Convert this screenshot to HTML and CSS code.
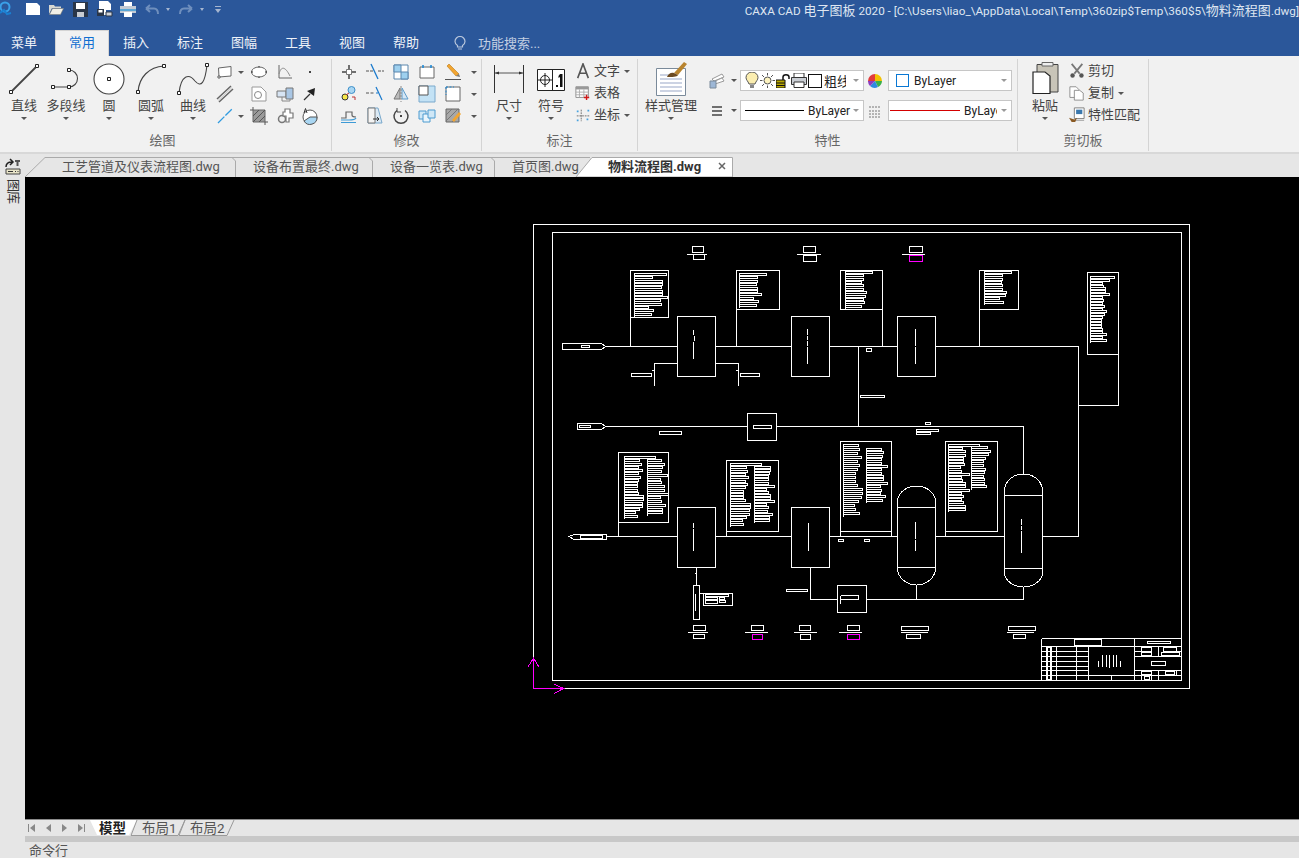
FILE: index.html
```html
<!DOCTYPE html>
<html lang="zh-CN">
<head>
    <meta charset="UTF-8">
    <title>CAXA CAD 电子图板 2020</title>
    <link rel="stylesheet" href="styles.css">
</head>
<body>
    <div class="topbar">
        <div class="quick">
            <svg class="q-logo" width="13" height="16" viewBox="0 0 13 16"><circle cx="5" cy="6" r="4.5" fill="none" stroke="#3aa0e8" stroke-width="2"/><path d="M0 12l4-3 3 4 4-1" fill="none" stroke="#1b7fd0" stroke-width="2"/></svg>
            <svg class="q-new" width="16" height="12" viewBox="0 0 16 12"><path d="M1 0H12L15 3V12H1Z" fill="#fff"/></svg>
            <svg class="q-open" width="16" height="11" viewBox="0 0 16 11"><path d="M1 10V1H6L7 2.5H13V4H4L1 10Z" fill="#d8d8d2"/><path d="M1.5 10.5L4.500 4.500H15.500L12.500 10.500Z" fill="#f1efe6" stroke="#7f7f78" stroke-width=".6"/></svg>
            <svg class="q-save" width="15" height="15" viewBox="0 0 15 15"><path d="M0 0H15V15H0Z" fill="#2a3648"/><path d="M3 1H12V7H3Z" fill="#fff"/><path d="M4 10H11V15H4Z" fill="#c8ccd2"/></svg>
            <svg class="q-saveas" width="16" height="16" viewBox="0 0 16 16"><path d="M2 0H11L14 3V9H9V14H2Z" fill="#fff"/><path d="M0 8H7V15H0Z" fill="#2a3648"/><path d="M1.500 9H5.500V11.500H1.500Z" fill="#fff"/><path d="M9 11H15V15H9Z" fill="#cfd3d8" stroke="#2a3648"/></svg>
            <svg class="q-print" width="16" height="15" viewBox="0 0 16 15"><path d="M4 0H12V4H4Z" fill="#fff"/><path d="M0 4H16V11H0Z" fill="#c3cad3"/><path d="M0 7H16V9H0Z" fill="#5ba7d6"/><path d="M4 10H12V15H4Z" fill="#fff"/></svg>
            <svg class="q-undo" width="14" height="11" viewBox="0 0 14 11"><path d="M1 4.500H9C12 4.500 13 6.500 13 10M1 4.500L5 1M1 4.500L5 8" fill="none" stroke="#6f8fbd" stroke-width="2"/></svg>
            <span class="q-caret"></span>
            <svg class="q-redo" width="14" height="11" viewBox="0 0 14 11"><path d="M13 4.500H5C2 4.500 1 6.500 1 10M13 4.500L9 1M13 4.500L9 8" fill="none" stroke="#6f8fbd" stroke-width="2"/></svg>
            <span class="q-caret"></span>
            <svg class="q-more" width="6" height="7" viewBox="0 0 6 7"><path d="M0 0H6V1H0ZM0 3H6L3 7Z" fill="#a6b6d0"/></svg>
        </div>
        <div class="title">CAXA CAD <span>电子图板</span> 2020 - [C:\Users\liao_\AppData\Local\Temp\360zip$Temp\360$5\<span>物料流程图</span>.dwg]</div>
    </div>

    <div class="menu-tabs">
        <div class="menu-tab first">菜单</div>
        <div class="menu-tab active">常用</div>
        <div class="menu-tab">插入</div>
        <div class="menu-tab">标注</div>
        <div class="menu-tab">图幅</div>
        <div class="menu-tab">工具</div>
        <div class="menu-tab">视图</div>
        <div class="menu-tab">帮助</div>
        <div class="search">
            <svg width="12" height="14" viewBox="0 0 12 14"><path d="M3.500 9.500C2 8.500 1 7 1 5.500A5 5 0 0 1 11 5.500C11 7 10 8.500 8.500 9.500V11H3.500ZM4 13H8" fill="none" stroke="#b8c6dc" stroke-width="1.200"/></svg>
            <span>功能搜索...</span>
        </div>
    </div>

    <div class="ribbon">
        <div class="group draw">
            <div class="group-body">
                <div class="big">
                    <svg width="36" height="36" viewBox="0 0 36 36"><path d="M5 31L31 5" stroke="#444" stroke-width="1.800"/><path class="grip" d="M3.500 29.500h3v3h-3zM29.500 3.500h3v3h-3z"/></svg>
                    <span>直线</span><i class="caret"></i>
                </div>
                <div class="big">
                    <svg width="36" height="36" viewBox="0 0 36 36"><path d="M5 26H21M21 9A8.500 8.500 0 0 1 21 26" fill="none" stroke="#444" stroke-width="1.100"/><path class="grip" d="M3.500 24.500h3v3h-3zM19.500 24.500h3v3h-3zM19.500 7.500h3v3h-3z"/></svg>
                    <span>多段线</span><i class="caret"></i>
                </div>
                <div class="big">
                    <svg width="36" height="36" viewBox="0 0 36 36"><circle cx="18" cy="18" r="15" fill="#fff" stroke="#444" stroke-width="1.100"/><path class="grip" d="M16.500 16.500h3v3h-3z"/></svg>
                    <span>圆</span><i class="caret"></i>
                </div>
                <div class="big">
                    <svg width="36" height="36" viewBox="0 0 36 36"><path d="M5 31C6 16 16 6 31 5" fill="none" stroke="#444" stroke-width="1.200"/><path class="grip" d="M3.500 29.500h3v3h-3zM29.500 3.500h3v3h-3z"/></svg>
                    <span>圆弧</span><i class="caret"></i>
                </div>
                <div class="big">
                    <svg width="36" height="36" viewBox="0 0 36 36"><path d="M4 32C6 14 14 12 20 20C26 27 30 22 32 4" fill="none" stroke="#444" stroke-width="1.100"/><path class="grip" d="M2.500 30.500h3v3h-3zM30.500 2.500h3v3h-3z"/></svg>
                    <span>曲线</span><i class="caret"></i>
                </div>
                <div class="tool-grid draw-grid">
                    <svg viewBox="0 0 18 18"><path d="M2.500 5L15 3.500V13L3 14Z" fill="#fff" stroke="#666"/><circle cx="3" cy="14" r="1.200" fill="#fff" stroke="#555"/></svg>
                    <i class="caret"></i>
                    <svg viewBox="0 0 18 18"><ellipse cx="9" cy="9" rx="7.500" ry="5" fill="#fff" stroke="#666"/><path d="M1 9h2M15 9h2M9 3v1.500M9 13.500V15" stroke="#333"/></svg>
                    <svg viewBox="0 0 18 18"><path d="M3 2V15H16" fill="none" stroke="#666"/><path d="M3 11C5 3 9 3 14 13" fill="none" stroke="#8a8a8a"/></svg>
                    <svg viewBox="0 0 18 18"><path d="M8 8h2v2H8z" fill="#444"/></svg>

                    <svg viewBox="0 0 18 18"><path d="M1 14L15 1M3 17L17 4" stroke="#666" stroke-width="1.500"/><path d="M2 15.500L16 2.500" stroke="#ccc"/></svg>
                    <span></span>
                    <svg viewBox="0 0 18 18"><path d="M2 2H11L16 7V16H2Z" fill="#fff" stroke="#999"/><circle cx="8" cy="10" r="3.500" fill="none" stroke="#888"/></svg>
                    <svg viewBox="0 0 18 18"><path d="M1 6H10V12H1Z" fill="#d7e4f3" stroke="#777"/><path d="M10 3H17V14H10Z" fill="#a9c6e4" stroke="#777"/><path d="M6 12V16H14V14" fill="none" stroke="#888"/></svg>
                    <svg viewBox="0 0 18 18"><path d="M3 15L9 9" stroke="#333" stroke-width="1.200"/><path d="M14 3L13 11L6 6Z" fill="#222"/></svg>

                    <svg viewBox="0 0 18 18"><path d="M2 16L16 2" stroke="#2f9be0" stroke-width="1.300" stroke-dasharray="9 1.500"/></svg>
                    <i class="caret"></i>
                    <svg viewBox="0 0 18 18"><path d="M3 3H15V15H3Z" fill="#9a9a9a" stroke="#666"/><path d="M3 9L9 3M3 15L15 3M9 15L15 9M0 3h3M15 15h3M3 0v3M15 15v3" stroke="#555"/></svg>
                    <svg viewBox="0 0 18 18"><circle cx="6" cy="12" r="3.500" fill="none" stroke="#777" stroke-width="1.500"/><path d="M9 2H14V6H17V11H13V15H10V9H7V5H9Z" fill="#fff" stroke="#777" stroke-width="1.200"/></svg>
                    <svg viewBox="0 0 18 18"><circle cx="9" cy="10" r="7" fill="#fff" stroke="#555"/><path d="M9 10H16A7 7 0 0 1 3 14L9 10Z" fill="#a9d6f2" stroke="#555"/><path d="M3 6L4.500 1.500L6 6" fill="none" stroke="#333"/></svg>
                </div>
            </div>
            <div class="group-name">绘图</div>
        </div>

        <div class="group modify">
            <div class="group-body">
                <div class="tool-grid modify-grid">
                    <svg viewBox="0 0 18 18"><path d="M6 9H2M16 9H12M9 6V2M9 16V12" stroke="#444" stroke-width="1.500"/><path d="M6.500 6.500h5v5h-5z" fill="#fff" stroke="#777"/></svg>
                    <svg viewBox="0 0 18 18"><path d="M0 8H8M12 8H18" stroke="#555" stroke-dasharray="3 1"/><path d="M5 1L12 16" stroke="#1778cc" stroke-width="1.300"/></svg>
                    <svg viewBox="0 0 18 18"><path d="M2 2H16V16H2Z" fill="#fff" stroke="#5b86ad"/><path d="M2 2H9V9H2ZM9 9H16V16H9Z" fill="#9ed0ef" stroke="#5b86ad"/></svg>
                    <svg viewBox="0 0 18 18"><path d="M2 4H16V15H2Z" fill="#fff" stroke="#666"/><path d="M5 2v3M13 2v3" stroke="#1f8ad8" stroke-width="1.600"/></svg>
                    <svg viewBox="0 0 18 18"><path d="M3 3L5 1L15 11L12 13Z" fill="#f2a531" stroke="#b87a1a" stroke-width=".6"/><path d="M12 13L15 11L16 14Z" fill="#777"/><path d="M1 16.500H17" stroke="#555"/></svg>
                    <i class="caret"></i>

                    <svg viewBox="0 0 18 18"><circle cx="11.500" cy="5" r="3.500" fill="#a9d6f2" stroke="#3d8fc9"/><circle cx="5" cy="12" r="3" fill="#f6e74a" stroke="#333"/><path d="M9 8L6 10M12 12h3v3" fill="none" stroke="#b33"/></svg>
                    <svg viewBox="0 0 18 18"><path d="M0 8H9" stroke="#555" stroke-dasharray="3 1.500"/><path d="M10 2L16 15" stroke="#1778cc" stroke-width="1.200"/><path d="M10 8h3" stroke="#1778cc" stroke-dasharray="2 1"/></svg>
                    <svg viewBox="0 0 18 18"><path d="M8 3V14H2Z" fill="#bbb" stroke="#777"/><path d="M10 3V14H16Z" fill="#d5e6f4" stroke="#5b9ac9"/><path d="M9 1V17" stroke="#888" stroke-dasharray="2 1"/></svg>
                    <svg viewBox="0 0 18 18"><path d="M1 1H17V17H1Z" fill="#c3e2f5" stroke="#7aa9cc"/><path d="M1 1H10V10H1Z" fill="#fff" stroke="#555"/></svg>
                    <svg viewBox="0 0 18 18"><path d="M2 2H16V16H2Z" fill="#fff" stroke="#666"/><path d="M2 2H10M2 2V10" stroke="#1f8ad8" stroke-dasharray="2 1.500"/></svg>
                    <i class="caret"></i>

                    <svg viewBox="0 0 18 18"><path d="M1 11H6V5H12V8C12 9 13 10 16 10" fill="none" stroke="#666" stroke-width="1.200"/><path d="M1 13H9C12 13 15 13 16 11M1 15.500H16" fill="none" stroke="#3d9ad6" stroke-width="1.200"/></svg>
                    <svg viewBox="0 0 18 18"><path d="M2 1H12L16 16H2Z" fill="#dbe9f4" stroke="#7aa9cc"/><path d="M2 1H9V16H2Z" fill="#f4f4f4" stroke="#777"/><path d="M7 12h6M11 10l2 2-2 2" fill="none" stroke="#333"/></svg>
                    <svg viewBox="0 0 18 18"><path d="M13 3.500A7 7 0 1 1 5 3.500" fill="none" stroke="#444" stroke-width="1.500"/><path d="M5 1v4h4" fill="none" stroke="#444"/><path d="M8 8h2v2H8z" fill="#444"/></svg>
                    <svg viewBox="0 0 18 18"><path d="M1 4H8V12H1Z" fill="#cfe7f6" stroke="#4d9bd0"/><path d="M5 7H12V15H5Z" fill="#eaf5fc" stroke="#4d9bd0"/><path d="M10 3H17V11H10Z" fill="#cfe7f6" stroke="#4d9bd0"/></svg>
                    <svg viewBox="0 0 18 18"><path d="M2 2H15V15H2Z" fill="#a8a8a8" stroke="#666"/><path d="M2 8L8 2M2 14L14 2M8 15L15 8" stroke="#777"/><path d="M8 13L15 5L17 7L10 15Z" fill="#f2a531"/></svg>
                    <i class="caret"></i>
                </div>
            </div>
            <div class="group-name">修改</div>
        </div>

        <div class="group notes">
            <div class="group-body">
                <div class="big">
                    <svg width="36" height="36" viewBox="0 0 36 36"><path d="M3.500 4V32M32.500 4V32" stroke="#333"/><path d="M4 12H32" stroke="#555"/><path d="M4 12l4-1.500v3zM32 12l-4-1.500v3z" fill="#333"/></svg>
                    <span>尺寸</span><i class="caret"></i>
                </div>
                <div class="big">
                    <svg width="36" height="36" viewBox="0 0 36 36"><path d="M4.500 8.500h27v21h-27zM19.500 8.500v21" fill="#fff" stroke="#222"/><circle cx="12" cy="19" r="4.500" fill="none" stroke="#222"/><path d="M12 12V26M5 19H19" stroke="#222"/><path d="M23 24h2v2h-2zM27 13h2.500v13H27v-10l-1.500 1v-2z" fill="#111"/></svg>
                    <span>符号</span><i class="caret"></i>
                </div>
                <div class="small-list">
                    <div class="small-row">
                        <svg viewBox="0 0 18 18"><path d="M3 17L9 1L15 17M5 11.500H13" fill="none" stroke="#555" stroke-width="1.800"/></svg>
                        <span>文字</span><i class="caret"></i>
                    </div>
                    <div class="small-row">
                        <svg viewBox="0 0 18 18"><path d="M1 2H15V14H1Z" fill="#fff" stroke="#888"/><path d="M1 2H15V5H1Z" fill="#999"/><path d="M5 5V14M10 5V14M1 8H15M1 11H15" stroke="#aaa"/><path d="M13 11v6M10 14h6" stroke="#d01818" stroke-width="1.600"/></svg>
                        <span>表格</span>
                    </div>
                    <div class="small-row">
                        <svg viewBox="0 0 18 18"><path d="M7 3V16M2 10H16" stroke="#666" stroke-dasharray="2 1"/><path d="M2 4h2v2H2zM14 3h2v2h-2zM2 14h2v2H2zM13 13h2v2h-2z" fill="#4aa3df"/></svg>
                        <span>坐标</span><i class="caret"></i>
                    </div>
                </div>
            </div>
            <div class="group-name">标注</div>
        </div>

        <div class="group props">
            <div class="group-body">
                <div class="big style-btn">
                    <svg width="36" height="36" viewBox="0 0 36 36"><path d="M3.500 7.500h29v27h-29z" fill="#fff" stroke="#7a8a9a"/><path d="M7 14H18M7 18H29M7 22H29M7 26H29M7 30H29" stroke="#9aa8c8" stroke-width="1.200"/><path d="M21 12L31 1L34 3L25 14Z" fill="#b8842f"/><path d="M14 16C15 13 18 11 21 12L25 14C24 16 19 16 14 16Z" fill="#6b4a22"/></svg>
                    <span>样式管理</span><i class="caret"></i>
                </div>
                <div class="prop-rows">
                    <div class="prop-row">
                        <svg class="prop-icon" viewBox="0 0 18 18"><path d="M4 7L14 2L16 5L6 9Z" fill="#fff" stroke="#9a9a9a"/><path d="M5 10L14 6L16 9L7 12Z" fill="#fff" stroke="#9a9a9a"/><path d="M2 9H8V16H2Z" fill="#9db7d6" stroke="#7a8a9a"/></svg>
                        <i class="caret"></i>
                        <div class="combo">
                            <svg class="state" width="14" height="17" viewBox="0 0 14 17"><path d="M4 12C3 9 1 8 1 5.500A6 5.500 0 0 1 13 5.500C13 8 11 9 10 12Z" fill="#fbeeb0" stroke="#555"/><path d="M5 13H9V16H5Z" fill="#888"/></svg>
                            <svg class="state" width="15" height="15" viewBox="0 0 15 15"><circle cx="7.500" cy="7.500" r="3.500" fill="#fdf3c0" stroke="#555"/><path d="M7.500 0v2.500M7.500 12.500V15M0 7.500h2.500M12.500 7.500H15M2 2l2 2M11 11l2 2M13 2l-2 2M4 11l-2 2" stroke="#555"/></svg>
                            <svg class="state" width="14" height="14" viewBox="0 0 14 14"><path d="M0 6H9V14H0Z" fill="#b9a800" stroke="#111"/><path d="M0 9H9M0 11.500H9" stroke="#111"/><path d="M7 6V3C7 0 13 0 13 3V5" fill="none" stroke="#111" stroke-width="1.500"/></svg>
                            <svg class="state" width="16" height="15" viewBox="0 0 16 15"><path d="M3 0H13V5H3Z" fill="#fff" stroke="#333"/><path d="M0.500 4.500h15v7h-15z" fill="#c9cdd3" stroke="#333"/><path d="M3 9H13V14.500H3Z" fill="#fff" stroke="#333"/></svg>
                            <span class="swatch"></span>
                            <span class="thick">粗线</span>
                            <i class="caret"></i>
                        </div>
                        <svg class="wheel" width="14" height="14" viewBox="0 0 14 14"><path d="M7 7V0A7 7 0 0 1 14 7Z" fill="#f2c100"/><path d="M7 7H14A7 7 0 0 1 10 13Z" fill="#3cb04a"/><path d="M7 7L10 13A7 7 0 0 1 2 12Z" fill="#2d8ae0"/><path d="M7 7L2 12A7 7 0 0 1 0 7Z" fill="#8a3cc0"/><path d="M7 7H0A7 7 0 0 1 7 0Z" fill="#e23a3a"/></svg>
                        <div class="combo wide">
                            <span class="color-box"></span>
                            <span>ByLayer</span>
                            <i class="caret"></i>
                        </div>
                    </div>
                    <div class="prop-row">
                        <svg class="prop-icon" viewBox="0 0 18 18"><path d="M4 5H14M4 9H14M4 13H14" stroke="#444" stroke-width="1.300"/></svg>
                        <i class="caret"></i>
                        <div class="combo">
                            <span class="line-sample black"></span>
                            <span>ByLayer</span>
                            <i class="caret"></i>
                        </div>
                        <svg class="wheel" width="14" height="14" viewBox="0 0 14 14"><path d="M1 3H13M1 7H13M1 10H13M1 13H13" stroke="#777" stroke-dasharray="2 1"/></svg>
                        <div class="combo wide">
                            <span class="line-sample red"></span>
                            <span class="clipped">ByLayer</span>
                            <i class="caret"></i>
                        </div>
                    </div>
                </div>
            </div>
            <div class="group-name">特性</div>
        </div>

        <div class="group clip">
            <div class="group-body">
                <div class="big">
                    <svg width="36" height="36" viewBox="0 0 36 36"><path d="M10 3.500H31V31H10Z" fill="#c8c4b8" stroke="#444"/><path d="M15 1.500H26V5H15Z" fill="#eee" stroke="#666"/><path d="M6 11H18L23 15V32.500H6Z" fill="#fff" stroke="#222" stroke-width="1.200"/></svg>
                    <span>粘贴</span><i class="caret"></i>
                </div>
                <div class="small-list">
                    <div class="small-row">
                        <svg viewBox="0 0 18 18"><path d="M3 1L12 12M15 1L6 12" stroke="#777" stroke-width="2"/><circle cx="4" cy="14" r="2.500" fill="#555"/><circle cx="14" cy="14" r="2.500" fill="#555"/></svg>
                        <span>剪切</span>
                    </div>
                    <div class="small-row">
                        <svg viewBox="0 0 18 18"><path d="M1 2H8L11 5V14H1Z" fill="#fff" stroke="#888"/><path d="M6 6H12L16 9V17H6Z" fill="#fff" stroke="#888"/></svg>
                        <span>复制</span><i class="caret"></i>
                    </div>
                    <div class="small-row">
                        <svg viewBox="0 0 18 18"><path d="M6 1H17V13H6Z" fill="#fff" stroke="#777"/><path d="M8 3H15V8H8Z" fill="#3b78ad"/><path d="M7 15H17" stroke="#999"/><path d="M0 12L6 14L9 12L7 17H3Z" fill="#8a5a24"/></svg>
                        <span>特性匹配</span>
                    </div>
                </div>
            </div>
            <div class="group-name">剪切板</div>
        </div>
    </div>

    <div class="workspace">
        <div class="side">
            <svg width="16" height="20" viewBox="0 0 16 20"><path d="M1 9C1 5 3 4 7 4M5 1L8 4L5 7" fill="none" stroke="#222" stroke-width="1.500"/><path d="M10 2H15V4H13.500V8H11.500V4H10Z" fill="#555"/><path d="M1 11H15V16H1Z" fill="#e8e4c8" stroke="#444"/><path d="M3 13.500H8M10 13.500h1M12.500 13.500h1" stroke="#333"/></svg>
            <div class="side-label">图库</div>
        </div>
        <div class="main">
            <div class="doc-tabs">
                <svg class="doc-outline" width="1274" height="23" viewBox="25 154 1274 23">
                    <path d="M25 177L45 157.500H232L235.500 161V177" fill="none" stroke="#aaa"/>
                    <path d="M232 157.500H369L372.500 161V177" fill="none" stroke="#aaa"/>
                    <path d="M369 157.500H491L494.500 161V177" fill="none" stroke="#aaa"/>
                    <path d="M491 157.500H590" fill="none" stroke="#aaa"/>
                    <path d="M576 177L592 157.500H732.500V177Z" fill="#fff" stroke="#aaa"/>
                </svg>
                <span class="doc-tab t1">工艺管道及仪表流程图.dwg</span>
                <span class="doc-tab t2">设备布置最终.dwg</span>
                <span class="doc-tab t3">设备一览表.dwg</span>
                <span class="doc-tab t4">首页图.dwg</span>
                <span class="doc-tab t5">物料流程图.dwg</span>
                <svg class="doc-close" width="8" height="8" viewBox="0 0 8 8"><path d="M1 1L7 7M7 1L1 7" stroke="#666" stroke-width="1.500"/></svg>
            </div>

            <svg id="sheet" class="canvas" width="1274" height="642" viewBox="25 177 1274 642">
                <g id="drawing" fill="none" stroke="#fff" stroke-width="1" shape-rendering="crispEdges">
                    <!-- frame -->
                    <path d="M533.500 224.500H1189.500V688.500H533.500ZM552.500 232.500H1181.500V680.500H552.500Z"/>
                    <!-- upper process line -->
                    <path d="M562.500 343.500H601L606 346.500L601 349.500H562.500ZM581.500 345.500H589V347.500H581.500Z"/>
                    <path d="M606 346.500H677.500M715.500 346.500H791.500M829.500 346.500H897.500M935.500 346.500H1078.500V536.500M630.500 317V346.500M736.500 309V346.500M882.500 309V346.500M979.500 309V346.500"/>
                    <path d="M677.500 316.500H715.500V376.500H677.500ZM791.500 316.500H829.500V376.500H791.500ZM897.500 316.500H935.500V376.500H897.500Z"/>
                    <path d="M693.500 330V335M694.500 336V341M693.500 342V359M807.500 329V335M807.500 336V340M807.500 341V346M807.500 347V364M915.500 329V346M915.500 347V364"/>
                    <path d="M630.500 270.500H668.500V317H630.500ZM736.500 270.500H779.500V309.500H736.500ZM840.500 270.500H882.500V309.500H840.500ZM979.500 270.500H1018.500V309.500H979.500ZM1087.500 272.500H1118.500V354.500H1087.500Z"/>
                    <path d="M1118.500 354.500V405.500H1078.500"/>
                    <path d="M677.500 363.500H654.500V386M715.500 363.500H738.500V386M652 370H654M736 370H738"/>
                    <path d="M631.500 373.500H651.500V376.500H631.500ZM740.500 373.500H759.500V376.500H740.500Z"/>
                    <path d="M858.500 346.500V426.500M866.500 348.500H871.500V351.500H866.500ZM860.500 395.500H884.500V397.500H860.500Z"/>
                    <!-- middle line -->
                    <path d="M577.500 423.500H601L606 426.500L601 429.500H577.500ZM579.500 425.500H590.500V427.500H579.500Z"/>
                    <path d="M606 426.500H747.500M776.500 426.500H1023.500V474"/>
                    <path d="M747.500 413.500H776.500V440.500H747.500ZM753.500 425.500H771.500V428.500H753.500ZM659.500 431.500H681.500V434.500H659.500Z"/>
                    <path d="M925.500 422.500H930.500V424.500H925.500ZM916.500 429.500H938.500V431.500H916.500ZM916.500 432.500H930.500V434.500H916.500Z"/>
                    <!-- lower line -->
                    <path d="M569 536.500L574 534.500H606.500V539.500H574ZM580.500 535.500H602.500V538.500H580.500Z"/>
                    <path d="M606.500 536.500H677.500M715.500 536.500H791.500M829.500 536.500H897.500M935.500 536.500H1004.500M1042.500 536.500H1078.500"/>
                    <path d="M677.500 507.500H715.500V567.500H677.500ZM791.500 507.500H829.500V567.500H791.500Z"/>
                    <path d="M693.500 523V528M693.500 529V551M808.500 523V551"/>
                    <path d="M618.500 452.500H668.500V522.500H618.500ZM726.500 460.500H778.500V531.500H726.500ZM840.500 441.500H891.500V531.500H840.500ZM945.500 441.500H997.500V531.500H945.500Z"/>
                    <path d="M618.500 522.500V536.500M726.500 531.500V536.500M840.500 531.500V536.500M891.500 531.500V536.500M945.500 531.500V536.500"/>
                    <path d="M838.500 539.500H843.500V541.500H838.500ZM864.500 539.500H869.500V541.500H864.500Z"/>
                    <!-- vessels -->
                    <path d="M897.500 569V500C899 492 907 486 916.500 486C926 486 934 492 935.500 500V569C935 578 926 585 916.500 585C907 585 898 578 897.500 569ZM897.500 507.500H935.500M897.500 567.500H935.500M915.500 522V539M915.500 540V551"/>
                    <path d="M1004.500 573V489C1006 480 1014 474 1023.500 474C1033 474 1041 480 1042.500 489V573C1042 581 1033 587 1023.500 587C1014 587 1005 581 1004.500 573ZM1004.500 495.500H1042.500M1004.500 568.500H1042.500M1021.500 519V525M1021.500 526V530M1021.500 531V553"/>
                    <path d="M916.500 585V599.500M1023.500 587V599.500H866.500M810.500 567.500V599.500H837.500"/>
                    <path d="M837.500 585.500H866.500V612.500H837.500ZM840.500 595.500H858.500V599.500H840.500M840.500 595.500V604M786.500 589.500H807.500V591.500H786.500Z"/>
                    <path d="M696.500 567.500V585.500M695 573H696M693.500 585.500H699.500V619.500H693.500ZM695.500 594V611"/>
                    <path d="M699.500 593.500H732.500V605.500H703.500V593.500"/>
                    <path d="M705.500 594.500H728.500V596.500H705.500ZM705.500 597.500H717.500V599.500H705.500ZM705.500 600.500H717.500V603.500H705.500ZM719.500 597.500H724.500V599.500H719.500ZM719.500 600.500H725.500V602.500H719.500Z"/>
                    <!-- title block -->
                    <path d="M1041.500 638.500H1181.500M1041.500 638.500V680.500M1041.500 646.500H1181.500M1134.500 638.500V680.500M1088.500 646.500V680.500M1076.500 646.500V680.500M1056.500 646.500V680.500M1051.500 646.500V680.500M1046.500 646.500V680.500"/>
                    <path d="M1041.500 651.500H1088.500M1041.500 656.500H1088.500M1041.500 661.500H1088.500M1041.500 666.500H1088.500M1041.500 670.500H1088.500M1041.500 675.500H1134.500M1111.500 675.500V680.500"/>
                    <path d="M1074.500 639.500H1101.500V645.500H1074.500ZM1147.500 641.500H1170.500V643.500H1147.500Z"/>
                    <path d="M1047.500 647.500H1050.500V679.500H1047.500Z"/>
                    <path d="M1098.500 661V667M1102.500 655V667M1106.500 655V667M1109.500 655V668M1113.500 655V667M1116.500 655V667M1120.500 661V667"/>
                    <path d="M1134.500 656.500H1181.500M1134.500 670.500H1181.500M1134.500 675.500H1181.500M1134.500 651.500H1141.500M1176.500 651.500H1181.500"/>
                    <path d="M1141.500 646.500V656.500M1151.500 646.500V656.500M1158.500 646.500V656.500M1176.500 646.500V651.500M1141.500 670.500V680.500M1151.500 670.500V680.500M1158.500 670.500V680.500M1176.500 670.500V675.500"/>
                    <path d="M1141.500 647.500H1151.500V651.500H1141.500ZM1141.500 652.500H1151.500V655.500H1141.500ZM1163.500 647.500H1176.500V651.500H1163.500ZM1161.500 652.500H1179.500V655.500H1161.500ZM1151.500 661.500H1165.500V665.500H1151.500ZM1141.500 671.500H1151.500V674.500H1141.500ZM1165.500 671.500H1174.500V674.500H1165.500ZM1144.500 676.500H1149.500V679.500H1144.500Z"/>
                </g>
                <g id="stacks" fill="none" stroke="#fff" stroke-width="1" shape-rendering="crispEdges"></g>
                <path d="M533.500 659V688.500H563M528 667L533.500 658L539 667M554 684L563.500 688.500L554 693.500" fill="none" stroke="#f0f" stroke-width="1" shape-rendering="crispEdges"/>
            </svg>

            <div class="sheet-tabs">
                <svg class="sheet-outline" width="240" height="17" viewBox="25 819 240 17">
                    <path d="M90 820L97 835H129L137 820Z" fill="#fff"/>
                    <path d="M137 820L131 835.500H178L185 820M185 820L179 835.500H227L234 820" fill="none" stroke="#999"/>
                </svg>
                <div class="sheet-nav">
                    <svg width="7" height="8" viewBox="0 0 7 8"><path d="M0 0h1v8H0zM7 0v8L2 4z" fill="#888"/></svg>
                    <svg width="5" height="8" viewBox="0 0 5 8"><path d="M5 0v8L0 4z" fill="#888"/></svg>
                    <svg width="5" height="8" viewBox="0 0 5 8"><path d="M0 0v8L5 4z" fill="#888"/></svg>
                    <svg width="7" height="8" viewBox="0 0 7 8"><path d="M6 0h1v8H6zM0 0v8L5 4z" fill="#888"/></svg>
                </div>
                <span class="sheet-tab active">模型</span>
                <span class="sheet-tab">布局1</span>
                <span class="sheet-tab">布局2</span>
            </div>
            <div class="gutter"></div>
        </div>
    </div>

    <div class="command">命令行</div>
    <script src="drawing.js"></script>
</body>
</html>
```
FILE: styles.css
```css
* {
    box-sizing: border-box;
}
html, body {
    height: 858px;
    overflow: hidden;
}
body {
    margin: 0;
    display: flex;
    flex-direction: column;
    background-color: #e6e6e6;
    font-family: Roboto, "Noto Sans CJK SC", sans-serif;
    font-size: 13px;
    color: #444;
}
svg {
    display: block;
    flex-shrink: 0;
}
i.caret {
    display: block;
    flex-shrink: 0;
    width: 0;
    height: 0;
    border-left: 3px solid transparent;
    border-right: 3px solid transparent;
    border-top: 3px solid #555;
}

/* title bar */
.topbar {
    height: 30px;
    flex-shrink: 0;
    display: flex;
    justify-content: space-between;
    background-color: #2b579a;
}
.quick {
    display: flex;
    align-items: flex-start;
    padding-top: 3px;
}
.q-logo { margin: -2px 12px 0 0; }
.q-new { margin-right: 7px; }
.q-open { margin: 1px 9px 0 0; }
.q-save { margin: -1px 9px 0 0; }
.q-saveas { margin: -2px 7px 0 0; }
.q-print { margin: -1px 9px 0 0; }
.q-undo { margin: 1px 7px 0 0; }
.q-redo { margin: 1px 7px 0 0; }
.q-caret {
    width: 0;
    height: 0;
    margin: 5px 9px 0 0;
    border-left: 2.500px solid transparent;
    border-right: 2.500px solid transparent;
    border-top: 3px solid #a6b6d0;
}
.q-more { margin: 3px 0 0 2px; }
.title {
    padding-top: 1px;
    line-height: 20px;
    font-size: 11.700px;
    color: #dfe6f1;
    white-space: nowrap;
}
.title span {
    font-size: 13px;
}

/* menu tabs */
.menu-tabs {
    height: 26px;
    flex-shrink: 0;
    display: flex;
    background-color: #2b579a;
    color: #eef2f8;
    line-height: 25px;
}
.menu-tab {
    width: 54px;
    text-align: center;
}
.menu-tab.first {
    width: 48px;
    margin-right: 7px;
}
.menu-tab.active {
    background-color: #f1f1f1;
    color: #0f6fd1;
    border: 1px solid #d4d4d4;
    border-bottom: none;
    line-height: 24px;
}
.search {
    display: flex;
    align-items: center;
    margin-left: 21px;
    color: #c3cfe2;
}
.search span {
    margin-left: 12px;
}

/* ribbon */
.ribbon {
    height: 98px;
    flex-shrink: 0;
    display: flex;
    background-color: #f1f1f1;
    border-bottom: 2px solid #d8d8d8;
    padding-top: 3px;
}
.group {
    height: 92px;
    flex-shrink: 0;
    display: flex;
    flex-direction: column;
    border-right: 1px solid #d4d4d4;
}
.group-body {
    height: 72px;
    display: flex;
    padding-top: 2px;
}
.group-name {
    height: 20px;
    line-height: 20px;
    text-align: center;
    color: #666;
}
.draw { width: 332px; padding-left: 3px; }
.draw .group-name { padding-right: 9px; }
.draw .big:nth-child(3) { margin-left: 1px; }
.modify { width: 150px; }
.notes { width: 156px; }
.props { width: 380px; }
.clip { width: 131px; }
.notes .group-body { padding-left: 6px; }
.clip .group-body { padding-left: 6px; }
.big {
    width: 42px;
    flex-shrink: 0;
    display: flex;
    flex-direction: column;
    align-items: center;
    white-space: nowrap;
    line-height: 16px;
}
.big span {
    height: 16px;
    margin-top: 1px;
}
.big i.caret {
    margin-top: 3px;
}
.grip {
    fill: #fff;
    stroke: #222;
    stroke-width: 1;
}
.tool-grid {
    display: grid;
    grid-auto-rows: 22px;
    align-items: center;
    justify-items: center;
}
.tool-grid svg {
    width: 18px;
    height: 18px;
}
.draw-grid {
    grid-template-columns: 21px 12px 24px 27px 24px;
}
.modify-grid {
    grid-template-columns: repeat(5, 26px) 16px;
    margin-left: 4px;
}
.small-list {
    margin-top: -1px;
}
.small-row {
    height: 22px;
    display: flex;
    align-items: center;
    white-space: nowrap;
    line-height: 20px;
}
.small-row svg {
    width: 16px;
    height: 16px;
    margin: 0 3px;
}
.small-row i.caret {
    margin-left: 4px;
}
.style-btn {
    width: 60px;
    margin-left: 3px;
}
.prop-rows {
    display: flex;
    flex-direction: column;
    gap: 9px;
    padding: 9px 0 0 7px;
}
.prop-row {
    height: 21px;
    display: flex;
    align-items: center;
}
.prop-icon {
    width: 18px;
    height: 18px;
}
.prop-row > i.caret {
    margin: 0 3px 0 5px;
}
.combo {
    position: relative;
    width: 124px;
    height: 21px;
    flex-shrink: 0;
    display: flex;
    align-items: center;
    padding-left: 4px;
    background-color: #fff;
    border: 1px solid #c6c6c6;
    overflow: hidden;
    color: #222;
    font-size: 12px;
}
.combo i.caret {
    position: absolute;
    right: 4px;
    top: 8px;
    border-top-color: #999;
}
.state {
    margin-right: 1px;
}
.swatch {
    width: 14px;
    height: 14px;
    flex-shrink: 0;
    border: 1px solid #111;
}
.thick {
    width: 22px;
    margin-left: 2px;
    overflow: hidden;
    white-space: nowrap;
    font-size: 13px;
}
.wheel {
    margin: 0 6px 0 4px;
}
.color-box {
    width: 13px;
    height: 13px;
    margin: 0 5px 0 3px;
    border: 1px solid #0a78d4;
}
.line-sample {
    flex-shrink: 0;
    height: 1px;
    margin-right: 4px;
}
.line-sample.black {
    width: 59px;
    background-color: #000;
}
.line-sample.red {
    width: 70px;
    margin-left: -3px;
    background-color: #d40000;
}
.clipped {
    width: 33px;
    overflow: hidden;
    white-space: nowrap;
}

/* workspace */
.workspace {
    height: 688px;
    flex-shrink: 0;
    display: flex;
}
.side {
    width: 25px;
    flex-shrink: 0;
    display: flex;
    flex-direction: column;
    align-items: center;
    padding-top: 4px;
}
.side-label {
    margin-top: 1px;
    writing-mode: vertical-rl;
    text-orientation: sideways;
    line-height: 14px;
    letter-spacing: -1px;
    color: #333;
}
.main {
    width: 1274px;
    display: flex;
    flex-direction: column;
}
.doc-tabs {
    position: relative;
    height: 23px;
    flex-shrink: 0;
    display: flex;
    align-items: center;
    white-space: nowrap;
    color: #555;
}
.doc-outline {
    position: absolute;
    left: 0;
    top: 0;
}
.doc-tab {
    position: relative;
}
.t1 { margin-left: 37px; width: 191px; }
.t2 { width: 137px; }
.t3 { width: 122px; }
.t4 { width: 96px; }
.t5 { width: 110px; font-weight: 700; color: #333; }
.doc-close {
    position: relative;
}
.canvas {
    background-color: #000;
}
.sheet-tabs {
    position: relative;
    height: 17px;
    flex-shrink: 0;
    display: flex;
    align-items: center;
    border-top: 1px solid #8a8a8a;
    color: #555;
    line-height: 16px;
}
.sheet-outline {
    position: absolute;
    left: 0;
    top: -1px;
}
.sheet-nav {
    position: relative;
    width: 65px;
    display: flex;
    align-items: center;
    gap: 11px;
    padding-left: 3px;
}
.sheet-tab {
    position: relative;
    width: 48px;
    height: 16px;
    padding-left: 5px;
    font-size: 13.500px;
    white-space: nowrap;
}
.sheet-tab.active {
    width: 47px;
    padding-left: 9px;
    color: #222;
    font-weight: 700;
}
.gutter {
    height: 6px;
    margin-top: auto;
    background-color: #c8c8c8;
}
.command {
    height: 16px;
    padding-left: 29px;
    line-height: 18px;
    color: #555;
}
```
FILE: drawing.js
```js
// note text shows as stacks of thin outlined bars in the drawing
const stacks = [
    [634, 273, 316, [32, 18, 28, 28, 27, 28, 28, 33, 26, 27, 14, 19, 17]],
    [739, 273, 307, [27, 18, 18, 17, 18, 18, 22, 14, 19, 17]],
    [845, 271, 308, [27, 18, 18, 16, 18, 18, 21, 20, 18, 19, 16]],
    [984, 271, 304, [27, 18, 18, 17, 18, 18, 22, 21, 15, 19]],
    [1090, 276, 342, [24, 19, 12, 13, 15, 15, 19, 12, 13, 12, 14, 12, 16, 14, 12, 11, 11, 11, 12, 12, 16, 12, 16]],
    [624, 456, 518, [31, 15, 17, 14, 18, 14, 16, 14, 13, 13, 13, 14, 19, 19, 18, 18, 15, 11, 13]],
    [647, 459, 515, [14, 17, 15, 14, 20, 13, 14, 17, 17, 21, 13, 14, 18, 15, 15]],
    [730, 463, 526, [31, 16, 17, 15, 18, 15, 17, 15, 13, 13, 13, 15, 20, 20, 19, 19, 16, 12, 13]],
    [754, 466, 522, [16, 16, 15, 14, 14, 14, 20, 12, 14, 16, 16, 20, 12, 14, 13, 18, 15, 15]],
    [843, 444, 516, [15, 16, 14, 18, 14, 16, 14, 12, 12, 12, 14, 19, 19, 18, 15, 11, 12, 16]],
    [866, 448, 502, [15, 17, 16, 15, 15, 21, 15, 15, 17, 17, 21, 14, 15, 14, 19, 16]],
    [948, 444, 511, [31, 14, 17, 17, 15, 15, 16, 12, 13, 21, 13, 14, 17, 17, 21, 13, 15, 13, 15, 17, 17]],
    [971, 446, 489, [16, 19, 17, 14, 12, 12, 14, 13, 12, 13, 13, 15]]
];

// the small tag marks above and below the process lines
const tags = [
    [692.5, 246.5, 11, 6, 687, 707, 693.5, 254.5, 11, 5, "#fff"],
    [803.5, 246.5, 12, 6, 797, 821, 803.5, 255.5, 13, 6, "#fff"],
    [909.5, 246.5, 13, 6, 902, 925, 909.5, 255.5, 13, 6, "#f0f"],
    [693.5, 625.5, 12, 5, 688, 708, 693.5, 634.5, 11, 4, "#fff"],
    [751.5, 625.5, 12, 5, 745, 768, 752.5, 634.5, 10, 5, "#f0f"],
    [799.5, 625.5, 11, 5, 794, 817, 800.5, 634.5, 10, 5, "#fff"],
    [847.5, 625.5, 12, 5, 839, 862, 847.5, 634.5, 12, 5, "#f0f"],
    [901.5, 626.5, 27, 4, 901, 928, 906.5, 634.5, 14, 4, "#fff"],
    [1008.5, 626.5, 27, 4, 1007, 1034, 1013.5, 634.5, 12, 4, "#fff"]
];

const ns = "http://www.w3.org/2000/svg";
function addPath(parent, path, color) {
    const el = document.createElementNS(ns, "path");
    el.setAttribute("d", path);
    if (color) el.setAttribute("stroke", color);
    parent.appendChild(el);
}

let d = "";
stacks.forEach(([x, y0, y1, widths]) => {
    const pitch = (y1 - y0) / widths.length;
    d += `M${x + 0.5} ${y0 + 0.5}V${y1 + 0.5}`;
    widths.forEach((w, i) => {
        const y = Math.round(y0 + i * pitch) + 0.5;
        d += `M${x + 0.5} ${y}h${w}v2h${-w}Z`;
    });
});
addPath(document.getElementById("stacks"), d);

const drawing = document.getElementById("drawing");
tags.forEach(([x, y, w, h, lx0, lx1, bx, by, bw, bh, color]) => {
    addPath(drawing, `M${x} ${y}h${w}v${h}h${-w}ZM${lx0} ${y + h + 2}H${lx1}`);
    addPath(drawing, `M${bx} ${by}h${bw}v${bh}h${-bw}Z`, color);
});
```
